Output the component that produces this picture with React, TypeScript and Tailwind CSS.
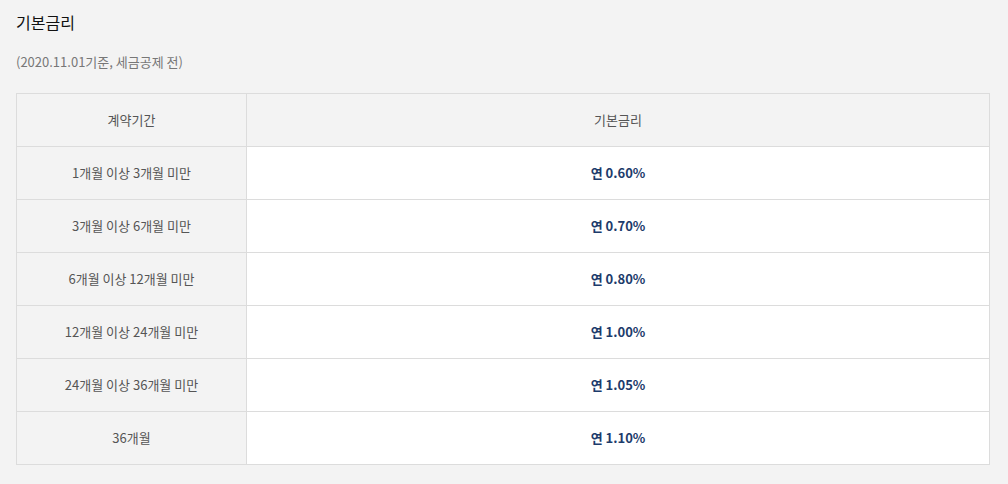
import React from "react";

const rows = [
  ["1개월 이상 3개월 미만", "연 0.60%"],
  ["3개월 이상 6개월 미만", "연 0.70%"],
  ["6개월 이상 12개월 미만", "연 0.80%"],
  ["12개월 이상 24개월 미만", "연 1.00%"],
  ["24개월 이상 36개월 미만", "연 1.05%"],
  ["36개월", "연 1.10%"],
];

export default function App() {
  return (
    <div
      className="w-[1008px] h-[484px] bg-[#f3f3f3] pl-4 pr-[18px] pt-[10px]"
      style={{ fontFamily: '"Noto Sans CJK KR", "Noto Sans", sans-serif' }}
    >
      <h2 className="text-[16px] leading-[24px] text-[#111] font-normal">기본금리</h2>
      <p className="mt-[18px] text-[13px] leading-[20px] text-[#777]">(2020.11.01기준, 세금공제 전)</p>
      <div className="mt-[21px] border border-[#dcdcdc] bg-white">
        <div className="grid grid-cols-[230px_1fr] h-[53px] bg-[#f3f3f3] border-b border-[#dcdcdc] text-[13px] text-[#555]">
          <div className="flex items-center justify-center border-r border-[#dcdcdc]">계약기간</div>
          <div className="flex items-center justify-center">기본금리</div>
        </div>
        {rows.map(([a, b], i) => (
          <div
            key={i}
            className={`grid grid-cols-[230px_1fr] ${i < rows.length - 1 ? "h-[53px] border-b border-[#dcdcdc]" : "h-[52px]"}`}
          >
            <div className="flex items-center justify-center bg-[#f3f3f3] border-r border-[#dcdcdc] text-[13px] text-[#555]">
              {a}
            </div>
            <div className="flex items-center justify-center text-[13px] font-semibold text-[#1d3b6b]">{b}</div>
          </div>
        ))}
      </div>
    </div>
  );
}
